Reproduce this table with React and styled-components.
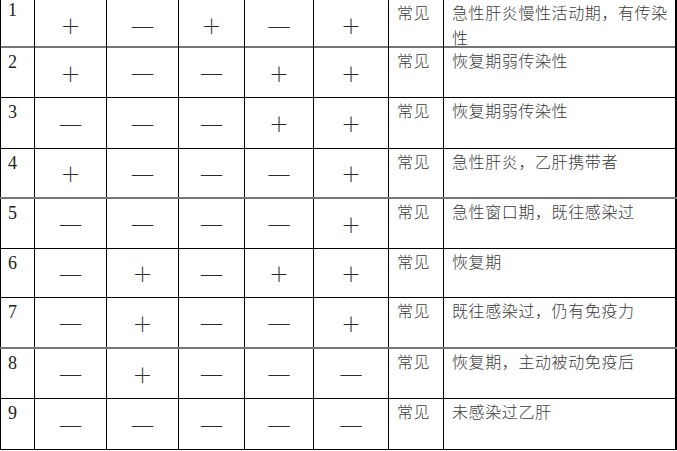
import React from 'react';
import styled, { createGlobalStyle } from 'styled-components';

const Global = createGlobalStyle`
  html, body {
    margin: 0;
    padding: 0;
    background: #fff;
    overflow: hidden;
  }
`

const Table = styled.div`
    width: 677px;
    box-sizing: border-box;
`
const Row = styled.div`
    display: grid;
    grid-template-columns: 34px 72px 72px 66px 69px 75px 55px 232px 2px;
    height: ${props => props.h}px;
    border-bottom: ${props => props.soft ? '2px solid #767676' : '1px solid #000'};
`
const Cell = styled.div`
    border-left: 1px solid #000;
    box-sizing: border-box;
    min-width: 0;
`
const Num = styled(Cell)`
    font-family: "Liberation Serif", serif;
    font-size: 18px;
    color: #222;
    padding: ${props => props.first ? '1px' : '5px'} 0 0 7px;
    line-height: 18px;
`
const Sign = styled(Cell)`
    display: flex;
    justify-content: center;
    align-items: center;
    font-family: ${props => props.plus ? '"Noto Sans CJK SC", sans-serif' : '"Liberation Serif", serif'};
    font-weight: 300;
    color: #2a2a2a;
    font-size: ${props => props.plus ? '20px' : '21px'};
    line-height: 1;
    padding-top: 2px;
`
const Text = styled(Cell)`
    font-family: "Noto Sans CJK SC", sans-serif;
    font-weight: 300;
    font-size: 16px;
    letter-spacing: 0.6px;
    line-height: 25px;
    color: #3a3a3a;
    padding: 0 2px 0 8px;
`
const Edge = styled.div`
    background: #000;
`

const rows = [
    { n: 1, s: '+-+-+', d: '急性肝炎慢性活动期，有传染性', h: 46, soft: true },
    { n: 2, s: '+--++', d: '恢复期弱传染性', h: 49 },
    { n: 3, s: '---++', d: '恢复期弱传染性', h: 50 },
    { n: 4, s: '+---+', d: '急性肝炎，乙肝携带者', h: 48, soft: true },
    { n: 5, s: '----+', d: '急性窗口期，既往感染过', h: 49 },
    { n: 6, s: '-+-++', d: '恢复期', h: 48 },
    { n: 7, s: '-+--+', d: '既往感染过，仍有免疫力', h: 49, soft: true },
    { n: 8, s: '-+---', d: '恢复期，主动被动免疫后', h: 49 },
    { n: 9, s: '-----', d: '未感染过乙肝', h: 50 },
]

export default function App() {
    return (
        <>
            <Global />
            <Table>
                {rows.map(r => (
                    <Row key={r.n} h={r.h} soft={r.soft}>
                        <Num first={r.n === 1}>{r.n}</Num>
                        {r.s.split('').map((c, i) => (
                            <Sign key={i} plus={c === '+'}>{c === '+' ? '＋' : '—'}</Sign>
                        ))}
                        <Text>常见</Text>
                        <Text>{r.d}</Text>
                        <Edge />
                    </Row>
                ))}
            </Table>
        </>
    )
}
